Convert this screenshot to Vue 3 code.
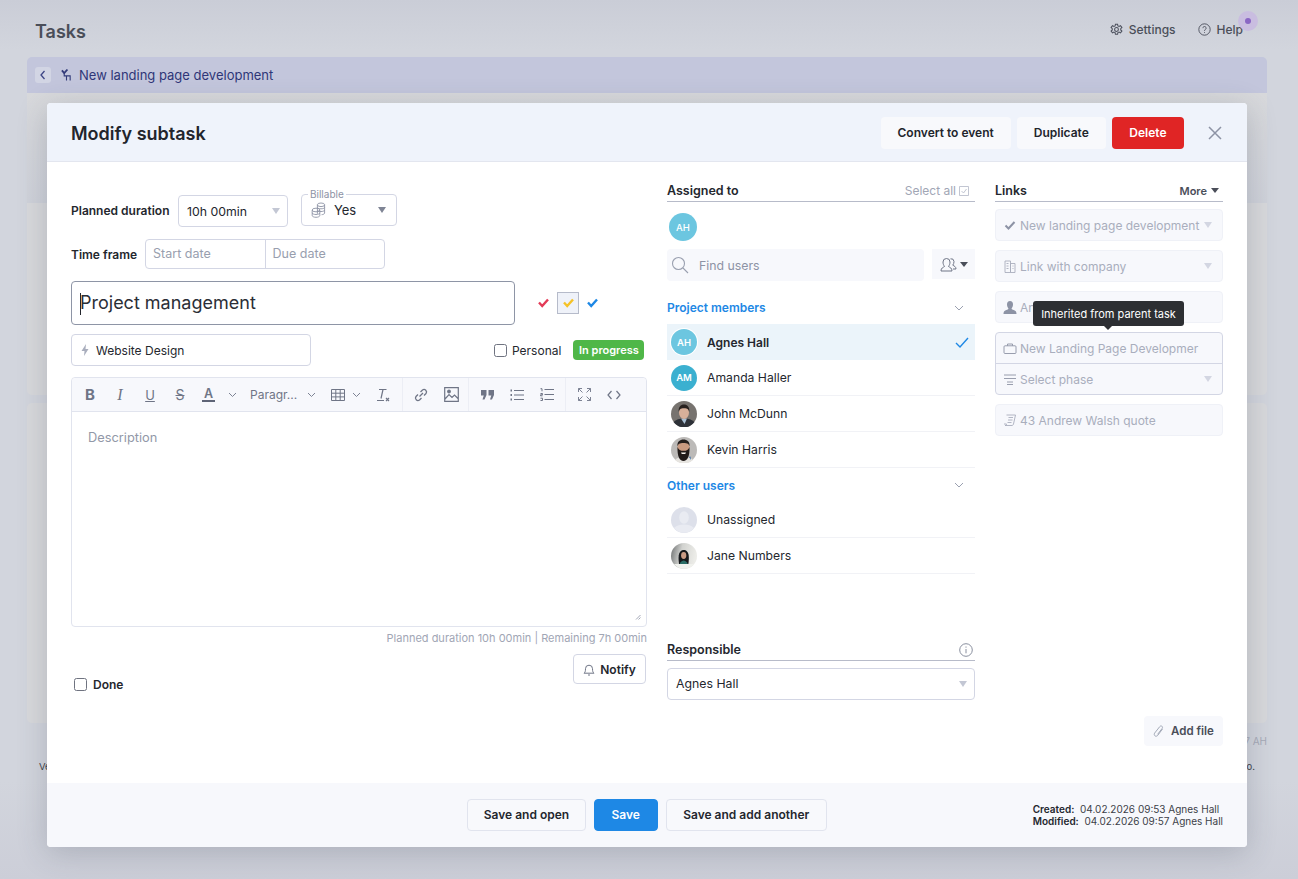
<script setup>
const projectMembers = [
  { name: 'Agnes Hall', initials: 'AH', color: '#6cc6e0', selected: true },
  { name: 'Amanda Haller', initials: 'AM', color: '#3bb0d0' },
  { name: 'John McDunn', photo: 'john' },
  { name: 'Kevin Harris', photo: 'kevin' },
]
const otherUsers = [
  { name: 'Unassigned', photo: 'none' },
  { name: 'Jane Numbers', photo: 'jane' },
]
</script>

<template>
  <div class="page">
    <header class="topbar">
      <h1 class="page-title">Tasks</h1>
      <div class="top-actions">
        <span class="top-link">
          <svg width="13" height="13" viewBox="0 0 24 24" fill="none" stroke="#4b4f5c" stroke-width="1.900"><circle cx="12" cy="12" r="3.500"/><path d="M10 2.500h4l.6 3 2.200 1 2.600-1.600 2.600 3.400-2.200 2.100v2.400l2.200 2.100-2.600 3.400-2.600-1.600-2.200 1-.6 3h-4l-.6-3-2.200-1-2.600 1.600-2.600-3.400 2.200-2.100v-2.400L2 8.300l2.600-3.400 2.600 1.600 2.200-1z"/></svg>
          Settings
        </span>
        <span class="top-link">
          <svg width="13" height="13" viewBox="0 0 24 24" fill="none" stroke="#4b4f5c" stroke-width="1.700"><circle cx="12" cy="12" r="10.500"/><path d="M9 9.500a3 3 0 1 1 4.500 2.600c-1 .6-1.500 1.200-1.500 2.400M12 17v1.500"/></svg>
          Help
          <span class="help-dot"><i></i></span>
        </span>
      </div>
    </header>

    <div class="content">
      <div class="crumb">
        <span class="back">
          <svg width="8" height="10" viewBox="0 0 8 10" fill="none" stroke="#3d4585" stroke-width="1.300"><path d="M5.500 1 2 5l3.500 4"/></svg>
        </span>
        <svg class="crumb-icon" width="11" height="14" viewBox="0 0 12 14" fill="none" stroke="#333b7a" stroke-width="1.200"><path d="m1 2 2.500 3L7 1" stroke-width="2"/><path d="M3.500 5v3H10v5M6 8.500V13"/></svg>
        <span class="crumb-text">New landing page development</span>
      </div>
      <div class="panel panel-top"></div>
      <div class="panel panel-mid"></div>
      <div class="panel panel-low"></div>
      <div class="stamp">7 AH</div>
      <div class="bg-line"><span>Ve</span><span>o.</span></div>
    </div>

    <section class="modal">
      <div class="modal-head">
        <h2 class="modal-title">Modify subtask</h2>
        <div class="head-actions">
          <button class="head-btn">Convert to event</button>
          <button class="head-btn">Duplicate</button>
          <button class="head-btn danger">Delete</button>
          <svg class="close" width="14" height="14" viewBox="0 0 14 14" fill="none" stroke="#8d93a5" stroke-width="1.500"><path d="m1 1 12 12M13 1 1 13"/></svg>
        </div>
      </div>

      <div class="modal-body">
        <div class="col-left">
          <div class="row-duration">
            <span class="field-label">Planned duration</span>
            <div class="field select duration-field">10h 00min<i class="caret light"></i></div>
            <div class="field select billable">
              <span class="legend">Billable</span>
              <svg width="15" height="16" viewBox="0 0 15 16" fill="none" stroke="#8d93a5" stroke-width=".9"><ellipse cx="10" cy="2.800" rx="3.600" ry="1.800"/><path d="M6.400 2.800v9M13.600 2.800V11c0 1-1.500 1.600-3 1.700M6.400 5.500c.5 1 1.800 1.300 3.600 1.300s3.100-.4 3.600-1.300M6.400 8.200c.5 1 1.800 1.300 3.600 1.300s3.100-.4 3.600-1.300"/><ellipse cx="5" cy="8" rx="3.800" ry="1.800"/><path d="M1.200 8v5.500c0 1 1.700 1.800 3.800 1.800s3.800-.8 3.800-1.800V8M1.200 10.800c0 1 1.700 1.700 3.800 1.700s3.800-.7 3.800-1.700"/></svg>
              <span class="billable-value">Yes</span>
              <i class="caret"></i>
            </div>
          </div>

          <div class="row-time">
            <span class="field-label">Time frame</span>
            <div class="date-pair">
              <span class="date-cell">Start date</span>
              <span class="date-cell">Due date</span>
            </div>
          </div>

          <div class="row-title">
            <div class="title-field"><span class="text-caret"></span>Project management</div>
            <div class="priorities">
              <svg width="11" height="10" viewBox="0 0 11 10" fill="none" stroke="#e33b57" stroke-width="2.400"><path d="m1 4.500 3.200 3.500L10 1.500"/></svg>
              <span class="priority-box">
                <svg width="11" height="10" viewBox="0 0 11 10" fill="none" stroke="#f5c227" stroke-width="2.400"><path d="m1 4.500 3.200 3.500L10 1.500"/></svg>
              </span>
              <svg width="11" height="10" viewBox="0 0 11 10" fill="none" stroke="#1e88e5" stroke-width="2.400"><path d="m1 4.500 3.200 3.500L10 1.500"/></svg>
            </div>
          </div>

          <div class="row-project">
            <div class="field project-field">
              <svg width="8" height="12" viewBox="0 0 8 12" fill="#a9aebd"><path d="M5 0 .5 7h3L3 12l4.500-7h-3z"/></svg>
              Website Design
            </div>
            <label class="personal"><span class="box"></span>Personal</label>
            <span class="status">In progress</span>
          </div>

          <div class="editor">
            <div class="toolbar">
              <div class="tool-group first">
                <span class="tool b">B</span>
                <span class="tool i">I</span>
                <span class="tool u">U</span>
                <span class="tool s">S</span>
                <span class="tool split">
                  <span class="color-a">A</span>
                  <svg class="chev" width="9" height="6" viewBox="0 0 9 6" fill="none" stroke="#7d8394"><path d="m1 1 3.500 3.500L8 1"/></svg>
                </span>
                <span class="tool para">Paragr...
                  <svg class="chev" width="9" height="6" viewBox="0 0 9 6" fill="none" stroke="#7d8394"><path d="m1 1 3.500 3.500L8 1"/></svg>
                </span>
                <span class="tool table-tool">
                  <svg width="14" height="12" viewBox="0 0 14 12" fill="none" stroke="#6f7586"><path d="M.5.500h13v11H.500zM.5 4.200h13M.5 7.900h13M4.800.5v11M9.200.5v11"/></svg>
                  <svg class="chev" width="9" height="6" viewBox="0 0 9 6" fill="none" stroke="#7d8394"><path d="m1 1 3.500 3.500L8 1"/></svg>
                </span>
                <span class="tool clear">
                  <svg width="14" height="14" viewBox="0 0 14 14" fill="none" stroke="#6f7586" stroke-width="1.200"><path d="M3 1.500h7.500M7 1.500 5 10.500M1 12.500h7M10 10l3 3M13 10l-3 3"/></svg>
                </span>
              </div>
              <div class="tool-group second">
                <span class="tool">
                  <svg width="16" height="16" viewBox="0 0 16 16" fill="none" stroke="#6f7586" stroke-width="1.300"><path d="M6.500 9.500 10 6M5 7.500 3 9.500a2.500 2.500 0 0 0 3.500 3.500l2-2M7.500 5l2-2A2.500 2.500 0 0 1 13 6.500l-2 2"/></svg>
                </span>
                <span class="tool">
                  <svg width="15" height="15" viewBox="0 0 15 15" fill="none" stroke="#6f7586" stroke-width="1.200"><path d="M.7.700h13.600v13.600H.700zM1 12l4-4.500 3 3 2.500-2.500 3.500 3.500"/><circle cx="5" cy="4.500" r="1.300" fill="#6f7586"/></svg>
                </span>
              </div>
              <div class="tool-group third">
                <span class="tool">
                  <svg width="13" height="10" viewBox="0 0 13 10" fill="#6f7586"><path d="M0 0h5.500v5L3.500 9.500H1.500L2.800 5.500H0zM7.500 0H13v5l-2 4.500H9l1.300-4H7.500z"/></svg>
                </span>
                <span class="tool">
                  <svg width="14" height="12" viewBox="0 0 14 12" fill="none" stroke="#6f7586" stroke-width="1.100"><path d="M4 1.500h10M4 6h10M4 10.500h10"/><path d="M.5 1.500h1.500M.5 6h1.500M.5 10.500h1.500" stroke-width="1.800"/></svg>
                </span>
                <span class="tool">
                  <svg width="14" height="13" viewBox="0 0 14 13" fill="none" stroke="#6f7586" stroke-width="1"><path d="M4.500 1.500H14M4.500 6.500H14M4.500 11.500H14M.5.700H2v2.600M.5 5.500h2v1.300h-2v1h2M.5 10.200h2v2.300h-2"/></svg>
                </span>
              </div>
              <div class="tool-group">
                <span class="tool">
                  <svg width="13" height="13" viewBox="0 0 13 13" fill="none" stroke="#7d8394" stroke-width="1"><path d="M.5 4V.5H4M.5.500 4.500 4.500M12.500 4V.5H9M12.500.500 8.500 4.500M.5 9v3.500H4M.5 12.500l4-4M12.500 9v3.500H9M12.500 12.500l-4-4"/></svg>
                </span>
                <span class="tool">
                  <svg width="14" height="10" viewBox="0 0 14 10" fill="none" stroke="#6f7586" stroke-width="1.200"><path d="M4.500 1 1 5l3.500 4M9.500 1 13 5 9.500 9"/></svg>
                </span>
              </div>
            </div>
            <div class="editor-area">
              <span class="placeholder">Description</span>
              <svg class="resize" width="6" height="6" viewBox="0 0 6 6" stroke="#8d93a5" stroke-width=".8"><path d="M1 5.500 5.500 1M3.500 5.500l2-2"/></svg>
            </div>
          </div>

          <div class="duration-note">Planned duration 10h 00min | Remaining 7h 00min</div>

          <div class="row-done">
            <label class="done"><span class="box"></span>Done</label>
            <button class="notify">
              <svg width="12" height="13" viewBox="0 0 12 13" fill="none" stroke="#6f7586"><path d="M1 10.200c1-1 1.500-1.500 1.500-4.500a3.500 3.500 0 0 1 7 0c0 3 .5 3.500 1.500 4.500zM5 12h2"/></svg>
              Notify
            </button>
          </div>
        </div>

        <div class="col-mid">
          <div class="section-head">
            <span class="section-title">Assigned to</span>
            <span class="select-all">Select all
              <svg width="10" height="10" viewBox="0 0 10 10" fill="none" stroke="#b3b8c6" stroke-width=".8"><path d="M.5.500h9v9h-9z"/><path d="m2.500 5 2 2 3-4"/></svg>
            </span>
          </div>
          <div class="assigned">
            <span class="avatar assigned-avatar" style="background:#6cc6e0">AH</span>
          </div>
          <div class="find-row">
            <div class="find">
              <svg width="18" height="18" viewBox="0 0 18 18" fill="none" stroke="#9aa0b0" stroke-width="1.100"><circle cx="7.500" cy="7.500" r="6"/><path d="m12 12 5 5"/></svg>
              <span>Find users</span>
            </div>
            <div class="group-btn">
              <svg width="17" height="15" viewBox="0 0 17 15" fill="none" stroke="#6f7586" stroke-width="1"><path d="M1 14c0-3 2-3.500 3.500-4.500C3.500 8 3 6.800 3 5a3.500 3.500 0 0 1 7 0c0 1.800-.5 3-1.500 4.500C10 10.500 12 11 12 14zM10.500 1.800A3 3 0 0 1 14 4.500c0 1.500-.4 2.500-1.200 3.700 1.300.8 3.200 1.400 3.200 3.800h-3"/></svg>
              <i class="caret dark"></i>
            </div>
          </div>

          <div class="group-head">
            <span>Project members</span>
            <svg width="10" height="6" viewBox="0 0 10 6" fill="none" stroke="#9aa0b0"><path d="m1 1 4 4 4-4"/></svg>
          </div>
          <div v-for="u in projectMembers" :key="u.name" class="user" :class="{ selected: u.selected }">
            <span v-if="u.initials" class="avatar" :style="{ background: u.color }">{{ u.initials }}</span>
            <svg v-else-if="u.photo === 'john'" class="photo" viewBox="0 0 26 26"><circle cx="13" cy="13" r="13" fill="#77736f"/><path d="M2.500 21c2.500-2.500 6-3.500 10.500-3.500s8 1 10.500 3.500A13 13 0 0 1 2.500 21z" fill="#2d3138"/><path d="M10 17.500h6L13.500 23z" fill="#a9bfd3"/><ellipse cx="13" cy="11.500" rx="5" ry="6.500" fill="#d8b09a"/><path d="M7.800 11c-.8-5 2-7.500 5.200-7.500s6 2.500 5.200 7.500c-.4-2.500-1.500-3.800-5.200-3.800S8.200 8.500 7.800 11z" fill="#27211f"/></svg>
            <svg v-else class="photo" viewBox="0 0 26 26"><circle cx="13" cy="13" r="13" fill="#bcbab8"/><path d="M4 23c2-2.500 5-3 9-3s7 .5 9 3a13 13 0 0 1-18 0z" fill="#e6e4e0"/><ellipse cx="12.500" cy="10.500" rx="6" ry="7.500" fill="#c99a80"/><path d="M6.500 10c-.3 9 2 14 6 14s6.300-5 6-14c-1 3-3 3.800-6 3.800S7.500 13 6.500 10z" fill="#211b19"/><path d="M6.500 9.500c-.6-5 2.500-7 6-7s6.600 2 6 7c-.5-2.500-2-3.500-6-3.500s-5.500 1-6 3.500z" fill="#241e1c"/><path d="M10 15.500h5l-.8 1.500h-3.400z" fill="#f5f1ea"/><path d="M20 23l-2-3 1.500-.5z" fill="#3a6fa5"/></svg>
            <span class="user-name">{{ u.name }}</span>
            <svg v-if="u.selected" class="user-check" width="14" height="11" viewBox="0 0 14 11" fill="none" stroke="#1e88e5" stroke-width="1.400"><path d="m1 6 4 4 8-9"/></svg>
          </div>

          <div class="group-head other">
            <span>Other users</span>
            <svg width="10" height="6" viewBox="0 0 10 6" fill="none" stroke="#9aa0b0"><path d="m1 1 4 4 4-4"/></svg>
          </div>
          <div v-for="u in otherUsers" :key="u.name" class="user">
            <svg v-if="u.photo === 'none'" class="photo" viewBox="0 0 26 26"><circle cx="13" cy="13" r="13" fill="#dde0ea"/><ellipse cx="13" cy="10.500" rx="4.800" ry="6.200" fill="#e9ebf2"/><path d="M3 21c3-3 6-3.500 10-3.500S20 18 23 21a13 13 0 0 1-20 0z" fill="#e9ebf2"/></svg>
            <svg v-else class="photo" viewBox="0 0 26 26"><defs><linearGradient id="janeBg" x1="0" x2="1" y1="0" y2=".2"><stop offset="0" stop-color="#6a6d6e"/><stop offset=".45" stop-color="#d2d3d0"/><stop offset="1" stop-color="#ecece8"/></linearGradient></defs><circle cx="13" cy="13" r="13" fill="url(#janeBg)"/><path d="M8 21c-.5-4-.5-6-.3-8.500.3-3.500 2.500-5.500 5-5.500s4.700 2 5 5.500c.2 2.500.2 4.500-.3 8.500z" fill="#15171a"/><ellipse cx="12.700" cy="12.500" rx="2.600" ry="3.400" fill="#c99b84"/><path d="M9 20c1-1.500 2.500-2.500 3.700-2.500s2.700 1 3.700 2.500l.6 2.500H8.500z" fill="#2a6d66"/><path d="M3 21h20a13 13 0 0 1-20 0z" fill="#f1f2ee"/></svg>
            <span class="user-name">{{ u.name }}</span>
          </div>

          <div class="section-head responsible-head">
            <span class="section-title">Responsible</span>
            <svg width="14" height="14" viewBox="0 0 14 14" fill="none" stroke="#7d8394" stroke-width=".9"><circle cx="7" cy="7" r="6.300"/><path d="M7 6v4.300M7 3.500v1.200"/></svg>
          </div>
          <div class="field select responsible">Agnes Hall<i class="caret light"></i></div>
        </div>

        <div class="col-right">
          <div class="section-head">
            <span class="section-title">Links</span>
            <span class="more">More<i class="caret dark"></i></span>
          </div>
          <div class="link-field first-link">
            <svg width="11" height="9" viewBox="0 0 11 9" fill="none" stroke="#8d93a5" stroke-width="2"><path d="m1 4.500 3 3L10 1"/></svg>
            <span>New landing page development</span><i class="caret pale"></i>
          </div>
          <div class="link-field">
            <svg width="11" height="13" viewBox="0 0 11 13" fill="none" stroke="#a9aebd" stroke-width=".9"><path d="M.5 1h5.500v11.500H.5zM6 3.500h4.500v9H6zM2 3.500h2M2 6h2M2 8.500h2M8 6h1M8 8.500h1"/></svg>
            <span>Link with company</span><i class="caret pale"></i>
          </div>
          <div class="link-field person">
            <svg width="13" height="13" viewBox="0 0 13 13" fill="#8d93a5"><path d="M6.500 0C8.500 0 9.500 1.500 9.500 3.500S8.500 7 8 7.500c0 1 2.500 1.500 4 2.500.7.500 1 1.500 1 3H0c0-1.500.3-2.500 1-3 1.500-1 4-1.500 4-2.500C4.500 7 3.500 5.500 3.500 3.500S4.500 0 6.500 0z"/></svg>
            <span>Andrew Walsh</span>
            <div class="tooltip">Inherited from parent task</div>
          </div>
          <div class="link-stack">
            <div class="stack-row">
              <svg width="13" height="11" viewBox="0 0 13 11" fill="none" stroke="#8d93a5" stroke-width=".9"><rect x=".5" y="2.800" width="12" height="7.700" rx="1"/><path d="M4 2.800V1h5v1.800"/></svg>
              <span>New Landing Page Developmer</span>
            </div>
            <div class="stack-row">
              <svg width="13" height="11" viewBox="0 0 13 11" fill="none" stroke="#8d93a5"><path d="M.5 1h12M.5 4.500h12M3.500 8h6M3.500 10.500h6" stroke-width=".9"/></svg>
              <span>Select phase</span><i class="caret pale"></i>
            </div>
          </div>
          <div class="link-field">
            <svg width="13" height="12" viewBox="0 0 13 12" fill="none" stroke="#a9aebd" stroke-width=".9"><path d="M3 1h9L10 10c-.2 1-1 1.500-1.500 1.500H1.500c1 0 1.500-.5 1.500-1.500H.5M5 3.500h4.500M4.500 6H9M4 8.500h4"/></svg>
            <span>43 Andrew Walsh quote</span>
          </div>
          <button class="add-file">
            <svg width="11" height="13" viewBox="0 0 11 13" fill="none" stroke="#9aa0b0" stroke-width=".9"><path d="M9.500 4 4.800 10.300c-.8 1-2 1.200-2.800.6S.9 9.100 1.700 8l5-6.300c.6-.8 1.500-1 2.200-.5s.8 1.500.2 2.300L4.600 9.300"/></svg>
            Add file
          </button>
        </div>
      </div>

      <footer class="modal-foot">
        <div></div>
        <div class="foot-actions">
          <button class="foot-btn open">Save and open</button>
          <button class="foot-btn primary">Save</button>
          <button class="foot-btn another">Save and add another</button>
        </div>
        <div class="meta">
          <div><b>Created:</b>&nbsp; 04.02.2026 09:53 Agnes Hall</div>
          <div><b>Modified:</b>&nbsp; 04.02.2026 09:57 Agnes Hall</div>
        </div>
      </footer>
    </section>
  </div>
</template>

<style>
body { margin: 0; }
</style>

<style scoped>
* { box-sizing: border-box; }
.page {
  position: relative;
  width: 1298px;
  height: 879px;
  overflow: hidden;
  background: linear-gradient(#cacdd7, #d2d5dd 50px, #d2d5dd 780px, #ccced8);
  font-family: Inter, "Liberation Sans", sans-serif;
  font-size: 12px;
  color: #24272e;
}
.topbar {
  height: 57px;
  padding: 6px 55px 0 35px;
  display: flex;
  align-items: center;
  justify-content: space-between;
}
.page-title { margin: 0; font-size: 18px; font-weight: 600; color: #4a4e59; }
.top-actions { display: flex; gap: 22px; margin-top: -4px; }
.top-link {
  position: relative;
  display: flex;
  align-items: center;
  gap: 6px;
  color: #4a4e59;
  font-size: 12px;
  font-weight: 500;
}
.help-dot {
  position: absolute;
  right: -15px;
  top: -11px;
  width: 20px;
  height: 20px;
  border-radius: 50%;
  background: #c9bde0;
  display: flex;
  align-items: center;
  justify-content: center;
}
.help-dot i { width: 6px; height: 6px; border-radius: 50%; background: #8a66c4; }
.content { padding: 0 31px 0 27px; }
.crumb {
  height: 36px;
  background: #c3c6dc;
  border-radius: 5px 5px 0 0;
  display: flex;
  align-items: center;
  padding-left: 8px;
  color: #2f3678;
  font-size: 13px;
}
.back {
  width: 16px;
  height: 16px;
  background: #d2d5e4;
  border-radius: 3px;
  display: flex;
  align-items: center;
  justify-content: center;
  margin-right: 10px;
}
.crumb-icon { margin-right: 7px; }
.panel-top { height: 110px; background: linear-gradient(#d8d9dc, #cfd2da); }
.panel-mid { height: 192px; background: #d8d9dc; border-radius: 0 0 5px 5px; }
.panel-low { height: 320px; margin-top: 8px; background: #d8d9dc; border-radius: 5px; }
.stamp { margin-top: 12px; text-align: right; font-size: 10px; color: #a7abb8; line-height: 12px; }
.bg-line {
  margin: 14px 12px 0 12px;
  display: flex;
  justify-content: space-between;
  font-size: 9.500px;
  line-height: 12px;
  color: #3c3f48;
}

.modal {
  position: absolute;
  left: 47px;
  top: 103px;
  width: 1200px;
  height: 744px;
  background: #fff;
  border-radius: 4px;
  box-shadow: 0 6px 30px rgba(60, 65, 85, 0.24);
  display: flex;
  flex-direction: column;
}
.modal-head {
  height: 59px;
  flex: none;
  background: #eff3fb;
  border-bottom: 1px solid #e3e6ef;
  border-radius: 4px 4px 0 0;
  padding: 2px 25px 0 24px;
  display: flex;
  align-items: center;
  justify-content: space-between;
}
.modal-title { margin: 0; font-size: 18px; font-weight: 600; color: #22252c; }
.head-actions { display: flex; align-items: center; gap: 6px; }
.head-btn {
  height: 32px;
  padding: 0 17px 2px;
  border: 0;
  border-radius: 4px;
  background: #f8f9fc;
  font: 600 12px Inter, sans-serif;
  color: #22252c;
}
.head-btn.danger { background: #e02525; color: #fff; padding: 0 17.500px 2px; }
.close { margin-left: 18px; }

.modal-body {
  flex: 1;
  display: grid;
  grid-template-columns: 576px 308px 228px;
  column-gap: 20px;
  padding: 0 24px;
  min-height: 0;
}
.col-left { padding-top: 33px; }
.row-duration { display: flex; align-items: center; height: 32px; }
.field-label { font-weight: 600; color: #24272e; font-size: 12px; }
.row-duration .field-label { margin-top: -2px; }
.field {
  border: 1px solid #d3d6e4;
  border-radius: 4px;
  background: #fff;
  display: flex;
  align-items: center;
  font-size: 12.300px;
}
.select { position: relative; }
.caret {
  display: inline-block;
  width: 0;
  height: 0;
  border-left: 4px solid transparent;
  border-right: 4px solid transparent;
  border-top: 6px solid #7f8595;
}
.caret.light { border-top-color: #c3c7d4; }
.caret.pale { border-top-color: #d3d6e2; }
.caret.dark { border-top-color: #4a4e59; border-left-width: 4px; border-right-width: 4px; border-top-width: 5px; }
.select > .caret { position: absolute; right: 7px; top: 50%; margin-top: -3px; }
.duration-field { width: 110px; height: 32px; margin-left: 8.500px; padding-left: 8px; }
.billable {
  position: relative;
  width: 96px;
  height: 32px;
  margin-left: 13px;
  margin-top: -2px;
  padding-left: 9px;
}
.billable > .caret { right: 10px; }
.billable-value { margin-left: 8px; font-size: 13px; }
.legend {
  position: absolute;
  top: -6px;
  left: 6px;
  padding: 0 2px;
  background: #fff;
  font-size: 10px;
  line-height: 11px;
  color: #8d93a5;
}
.row-time { display: flex; align-items: center; height: 30px; margin-top: 12px; }
.date-pair {
  margin-left: 8px;
  width: 240px;
  height: 30px;
  display: flex;
  border: 1px solid #d3d6e4;
  border-radius: 4px;
}
.date-cell { flex: 1; padding-left: 7px; line-height: 28px; color: #989eae; font-size: 12.500px; }
.date-cell + .date-cell { border-left: 1px solid #d3d6e4; }
.row-title { display: flex; align-items: center; margin-top: 12px; }
.title-field {
  width: 444px;
  height: 44px;
  border: 1px solid #8e95a6;
  border-radius: 4px;
  padding-left: 8px;
  line-height: 42px;
  font-size: 18px;
  color: #2b2e36;
}
.text-caret {
  display: inline-block;
  width: 1px;
  height: 22px;
  margin-right: -1px;
  background: #22252c;
  vertical-align: middle;
}
.priorities { display: flex; align-items: center; margin-left: 23px; }
.priority-box {
  width: 22px;
  height: 22px;
  margin: 0 8px;
  background: #eff2f9;
  border: 1px solid #b6bbca;
  display: flex;
  align-items: center;
  justify-content: center;
}
.row-project { display: flex; align-items: center; margin-top: 9px; }
.project-field { width: 240px; height: 32px; padding-left: 9px; gap: 7px; font-size: 12px; }
.personal {
  margin-left: 183px;
  display: flex;
  align-items: center;
  gap: 5px;
  font-size: 12px;
}
.box {
  width: 13px;
  height: 13px;
  border: 1px solid #6f7380;
  border-radius: 2.500px;
  background: #fff;
}
.status {
  margin-left: 12px;
  width: 71px;
  height: 20px;
  background: #4fb748;
  border-radius: 4px;
  color: #fff;
  font-size: 11px;
  font-weight: 600;
  text-align: center;
  line-height: 20px;
}
.editor {
  margin-top: 11px;
  height: 250px;
  border: 1px solid #e1e4ee;
  border-radius: 4px;
  display: flex;
  flex-direction: column;
}
.toolbar {
  height: 34px;
  flex: none;
  background: #f7f8fc;
  border-bottom: 1px solid #e1e4ee;
  display: flex;
  border-radius: 4px 4px 0 0;
}
.tool-group {
  display: flex;
  align-items: center;
  border-right: 1px solid #eceef5;
  padding: 0 3px;
}
.tool-group:last-child { border-right: 0; }
.tool-group.first { width: 331px; }
.tool-group.second { width: 66px; padding: 0 1px 0 3px; }
.tool-group.third { width: 97px; }
.tool {
  width: 30px;
  height: 100%;
  display: flex;
  align-items: center;
  justify-content: center;
  color: #6f7586;
  font-size: 13px;
}
.tool.b { font-weight: 700; font-size: 15px; }
.tool.i { font-family: "Liberation Serif", serif; font-style: italic; font-size: 16px; }
.tool.u { text-decoration: underline; font-size: 13px; }
.tool.s { text-decoration: line-through; font-size: 14px; }
.tool.split { width: 46px; justify-content: flex-start; padding-left: 7px; gap: 13px; }
.color-a { font-size: 12.500px; font-weight: 600; border-bottom: 2px solid #5e6476; line-height: 13px; padding: 0 2px; }
.tool.para { width: 78px; justify-content: flex-start; padding-left: 9px; gap: 10px; font-size: 12px; white-space: nowrap; }
.tool.table-tool { width: 48px; justify-content: flex-start; padding-left: 12px; gap: 7px; }
.tool.clear { width: 32px; }
.editor-area { position: relative; flex: 1; padding: 18px 16px; }
.placeholder { color: #9298a8; font-size: 12.800px; }
.resize { position: absolute; right: 5px; bottom: 6px; }
.duration-note { margin-top: 5px; text-align: right; color: #a1a6b5; font-size: 11px; line-height: 13px; }
.row-done { display: flex; justify-content: space-between; margin-top: 9px; height: 40px; padding-right: 1px; }
.done {
  display: flex;
  align-items: center;
  gap: 6px;
  margin: 23px 0 0 3px;
  height: 14px;
  font-weight: 600;
  font-size: 12px;
}
.notify {
  width: 73px;
  height: 30px;
  background: #fff;
  border: 1px solid #d3d6e4;
  border-radius: 4px;
  padding: 0;
  display: flex;
  align-items: center;
  justify-content: center;
  gap: 5px;
  font: 600 12px Inter, sans-serif;
  color: #24272e;
}

.col-mid, .col-right { padding-top: 22px; }
.section-head {
  height: 18px;
  border-bottom: 1px solid #b7bbc9;
  display: flex;
  align-items: center;
  justify-content: space-between;
  padding-bottom: 4px;
}
.section-title { font-weight: 600; font-size: 12.500px; color: #24272e; }
.select-all { color: #a1a6b5; font-size: 12px; display: flex; align-items: center; gap: 3px; padding-right: 6px; }
.assigned { height: 47px; padding: 11px 0 0 2px; }
.avatar {
  flex: none;
  width: 26px;
  height: 26px;
  border-radius: 50%;
  color: #fff;
  font-size: 9.500px;
  font-weight: 600;
  display: flex;
  align-items: center;
  justify-content: center;
}
.assigned-avatar { width: 28px; height: 28px; font-weight: 500; }
.find-row { display: flex; justify-content: space-between; }
.find {
  width: 257px;
  height: 32px;
  background: #f7f8fc;
  border-radius: 4px;
  display: flex;
  align-items: center;
  padding-left: 4px;
  gap: 10px;
  color: #8d93a5;
  font-size: 12.300px;
}
.group-btn {
  width: 43px;
  height: 30px;
  background: #f7f8fc;
  display: flex;
  align-items: center;
  justify-content: center;
  gap: 3px;
}
.group-head {
  height: 43px;
  padding: 10px 11px 0 0;
  display: flex;
  align-items: center;
  justify-content: space-between;
  color: #1e88e5;
  font-weight: 600;
  font-size: 12px;
}
.group-head.other { height: 34px; padding-top: 0; }
.user {
  height: 36px;
  padding-left: 4px;
  display: flex;
  align-items: center;
  border-bottom: 1px solid #f1f2f6;
  font-size: 12.200px;
}
.user.selected { background: #ebf4fa; border-bottom: 0; font-weight: 600; font-size: 12px; }
.user.selected .avatar { box-shadow: 0 0 0 1px #fff; }
.photo { flex: none; width: 26px; height: 26px; display: block; }
.user-name { margin-left: 10px; }
.user-check { margin-left: auto; margin-right: 6px; }
.responsible-head { margin-top: 69px; }
.responsible-head svg { margin-right: 2px; }
.responsible {
  width: 308px;
  height: 32px;
  margin-top: 7px;
  padding-left: 8px;
  padding-bottom: 1px;
}
.more { display: flex; align-items: center; gap: 4px; font-size: 11px; font-weight: 600; color: #4a4e59; padding-right: 4px; }
.link-field {
  position: relative;
  height: 32px;
  margin-top: 9px;
  border: 1px solid #eff1f7;
  border-radius: 4px;
  background: #f7f8fc;
  display: flex;
  align-items: center;
  padding: 0 10px 0 7px;
  color: #a9aebd;
  font-size: 12px;
  white-space: nowrap;
}
.first-link { margin-top: 7px; }
.link-field svg, .stack-row svg { flex: none; width: 14px; margin-right: 3px; }
.link-field .caret, .stack-row .caret { margin-left: auto; flex: none; }
.tooltip {
  position: absolute;
  left: 37px;
  top: 9px;
  width: 151px;
  height: 25px;
  border-radius: 3px;
  background: #2d2f33;
  color: #fff;
  font-size: 11px;
  line-height: 26px;
  text-align: center;
  z-index: 2;
}
.tooltip::after {
  content: "";
  position: absolute;
  left: 71px;
  bottom: -4px;
  border-left: 4px solid transparent;
  border-right: 4px solid transparent;
  border-top: 4px solid #2d2f33;
}
.link-stack {
  margin-top: 9px;
  height: 63px;
  border: 1px solid #d3d6e4;
  border-radius: 4px;
  background: #f7f8fc;
}
.stack-row {
  height: 30px;
  display: flex;
  align-items: center;
  padding: 0 10px 0 7px;
  color: #a9aebd;
  font-size: 12px;
  white-space: nowrap;
  overflow: hidden;
}
.stack-row + .stack-row { height: 31px; border-top: 1px solid #d3d6e4; }
.add-file {
  margin: 280px 0 0 149px;
  width: 79px;
  height: 30px;
  border: 0;
  border-radius: 4px;
  background: #f7f8fc;
  display: flex;
  align-items: center;
  justify-content: center;
  gap: 7px;
  font: 600 11.500px Inter, sans-serif;
  color: #4a4e59;
  padding: 0;
}

.modal-foot {
  height: 64px;
  flex: none;
  background: #f7f8fc;
  border-radius: 0 0 4px 4px;
  padding: 0 24px;
  display: grid;
  grid-template-columns: 1fr auto 1fr;
  align-items: center;
}
.foot-actions { display: flex; gap: 8px; }
.foot-btn {
  height: 32px;
  padding: 0 16px 2px;
  border: 1px solid #e1e4ee;
  border-radius: 4px;
  background: #f8f9fc;
  font: 600 12px Inter, sans-serif;
  color: #24272e;
}
.foot-btn.open { padding: 0 15.500px 2px; }
.foot-btn.another { padding: 0 16.500px 2px; }
.foot-btn.primary { background: #1e88e5; border-color: #1e88e5; color: #fff; width: 64px; padding: 0 0 2px; }
.meta {
  justify-self: end;
  font-size: 10px;
  line-height: 12px;
  color: #3c3f48;
  white-space: nowrap;
}
.meta b { font-weight: 600; color: #24272e; }
</style>
